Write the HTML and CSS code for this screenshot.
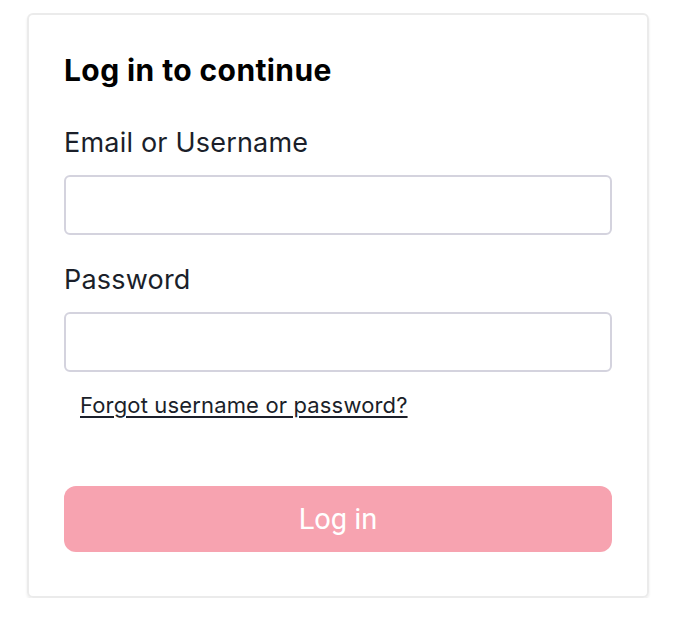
FILE: index.html
```html
<!DOCTYPE html>
<html lang="en">
<head>
<meta charset="utf-8">
<title>Log in</title>
<link rel="stylesheet" href="styles.css">
</head>
<body>
<div class="page">
  <form class="card">
    <h1 class="title">Log in to continue</h1>
    <label class="field">
      <span class="label">Email or Username</span>
      <input class="input" type="text">
    </label>
    <label class="field">
      <span class="label">Password</span>
      <input class="input" type="password">
    </label>
    <a class="forgot" href="#">Forgot username or password?</a>
    <button class="submit" type="button">Log in</button>
  </form>
</div>
</body>
</html>
```
FILE: styles.css
```css
* { box-sizing: border-box; }
html, body { margin: 0; padding: 0; background: #ffffff; }
body { font-family: Inter, "Noto Sans", sans-serif; color: #1b1f2a; }
.page { padding: 13px 39px 0 27px; }
.card {
  width: 622px;
  border: 2px solid #ebebeb;
  border-radius: 6px;
  box-shadow: 0 2px 3px rgba(0,0,0,0.08);
  padding: 37px 35px 44px 35px;
  display: flex;
  flex-direction: column;
}
.title {
  margin: 0 0 38px 0;
  font-size: 30px;
  letter-spacing: 0.4px;
  font-weight: 700;
  color: #000;
  line-height: 36px;
}
.field { display: flex; flex-direction: column; }
.label {
  font-size: 27px;
  letter-spacing: 0.2px;
  line-height: 34px;
  margin-bottom: 15px;
}
.input {
  height: 60px;
  border: 2px solid #d4d3de;
  border-radius: 6px;
  margin-bottom: 28px;
  font: inherit;
}
.field:last-of-type .input { margin-bottom: 18px; }
.forgot {
  align-self: flex-start;
  margin-left: 16px;
  font-size: 22px;
  letter-spacing: 0.15px;
  line-height: 30px;
  color: #1b1f2a;
  text-decoration: underline;
  text-underline-offset: 3px;
}
.submit {
  margin-top: 66px;
  height: 66px;
  border: none;
  border-radius: 12px;
  background: #f7a3b0;
  color: #ffffff;
  font-family: Roboto, sans-serif;
  font-size: 29px;
}
```
